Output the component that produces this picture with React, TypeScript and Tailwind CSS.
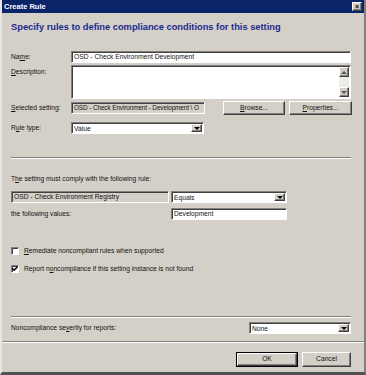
import React from 'react'

const sunken =
  'border border-t-[#808080] border-l-[#808080] border-b-white border-r-white shadow-[inset_1px_1px_0_#404040]'
const raised =
  'border border-t-white border-l-white border-b-[#404040] border-r-[#404040] shadow-[inset_-1px_-1px_0_#808080]'

const Arrow: React.FC = () => (
  <div className={`w-[11px] h-full bg-[#d4d0c8] ${raised} flex items-center justify-center`}>
    <div className="w-0 h-0 border-l-[3px] border-r-[3px] border-t-[3px] border-l-transparent border-r-transparent border-t-black" />
  </div>
)

const Select: React.FC<{ value: string; className: string }> = ({ value, className }) => (
  <div className={`${sunken} bg-white flex items-stretch ${className}`}>
    <span className="flex-1 pl-[2px] leading-[10px] pt-[1px]">{value}</span>
    <div className="p-[1px]">
      <Arrow />
    </div>
  </div>
)

const Button: React.FC<{ label: React.ReactNode; className: string }> = ({ label, className }) => (
  <div className={`${raised} bg-[#d4d0c8] flex items-center justify-center ${className}`}>{label}</div>
)

/**
 * Create Rule dialog
 */
const App: React.FC = () => {
  return (
    <div
      className="w-[366px] h-[375px] bg-[#d4d0c8] text-[6.7px] text-[#111] flex flex-col border-l-2 border-r-2 border-b-[3px] border-l-[#e8e6e0] border-r-[#808080] border-b-[#505050] overflow-hidden"
      style={{ fontFamily: 'Tahoma, "Liberation Sans", Arial, sans-serif' }}
    >
      {/* Title bar */}
      <div className="h-[13px] bg-[#0a246a] flex items-center justify-between pl-[2px] pr-[2px] shrink-0">
        <span className="text-white font-bold text-[7.5px]">Create Rule</span>
        <div className={`w-[10px] h-[9px] bg-[#d4d0c8] ${raised} flex items-center justify-center text-[7px] font-bold leading-none text-black`}>
          ×
        </div>
      </div>

      <div className="flex flex-col px-[9px]">
        {/* Heading */}
        <div className="mt-[8px] h-[12px] text-[#1a2a90] font-bold text-[9.3px] leading-[12px]">
          Specify rules to define compliance conditions for this setting
        </div>

        {/* Name */}
        <div className="mt-[18px] flex items-center h-[12px]">
          <span className="w-[60px]">Na<span className="underline">m</span>e:</span>
          <div className={`${sunken} bg-white flex-1 h-full pl-[2px] leading-[10px] mr-[4px]`}>
            OSD - Check Environment Development
          </div>
        </div>

        {/* Description */}
        <div className="mt-[2px] flex h-[34px]">
          <span className="w-[60px] pt-[2px]"><span className="underline">D</span>escription:</span>
          <div className={`${sunken} bg-white flex-1 h-full mr-[4px] flex justify-end p-[1px]`}>
            <div className="w-[10px] flex flex-col justify-between bg-[#eeece6]">
              <div className={`h-[10px] bg-[#d4d0c8] ${raised} flex items-center justify-center`}>
                <div className="w-0 h-0 border-l-[3px] border-r-[3px] border-b-[3px] border-l-transparent border-r-transparent border-b-[#555]" />
              </div>
              <div className={`h-[10px] bg-[#d4d0c8] ${raised} flex items-center justify-center`}>
                <div className="w-0 h-0 border-l-[3px] border-r-[3px] border-t-[3px] border-l-transparent border-r-transparent border-t-[#555]" />
              </div>
            </div>
          </div>
        </div>

        {/* Selected setting */}
        <div className="mt-[2px] flex items-center h-[14px]">
          <span className="w-[60px]"><span className="underline">S</span>elected setting:</span>
          <div className={`${sunken} bg-[#d4d0c8] w-[134px] h-[12px] pl-[2px] leading-[10px] whitespace-nowrap overflow-hidden text-[6.4px] tracking-[-0.1px]`}>
            OSD - Check Environment - Development \ O
          </div>
          <Button label={<span><span className="underline">B</span>rowse...</span>} className="ml-[18px] w-[62px] h-full" />
          <Button label={<span><span className="underline">P</span>roperties...</span>} className="ml-[4px] w-[63px] h-full" />
        </div>

        {/* Rule type */}
        <div className="mt-[7px] flex items-center h-[12px]">
          <span className="w-[60px]">R<span className="underline">u</span>le type:</span>
          <Select value="Value" className="w-[133px] h-full" />
        </div>

        {/* Separator */}
        <div className="mt-[23px] h-[2px] border-t border-t-[#808080] border-b border-b-white mr-[4px]" />

        <div className="mt-[15px] h-[10px] leading-[10px]">
          T<span className="underline">h</span>e setting must comply with the following rule:
        </div>

        <div className="mt-[7px] flex items-center h-[12px]">
          <div className={`${sunken} bg-[#d4d0c8] w-[158px] h-full pl-[2px] leading-[10px]`}>
            OSD - Check Environment Registry
          </div>
          <Select value="Equals" className="ml-[2px] w-[116px] h-full" />
        </div>

        <div className="mt-[5px] flex items-center h-[12px]">
          <span className="w-[160px]">the following values:</span>
          <div className={`${sunken} bg-white w-[116px] h-full pl-[2px] leading-[10px]`}>Development</div>
        </div>

        {/* Checkboxes */}
        <div className="mt-[27px] flex items-center h-[8px]">
          <div className={`${sunken} bg-white w-[8px] h-[8px]`} />
          <span className="ml-[5px]"><span className="underline">R</span>emediate noncompliant rules when supported</span>
        </div>
        <div className="mt-[10px] flex items-center h-[8px]">
          <div className={`${sunken} bg-white w-[8px] h-[8px] flex items-center justify-center`}>
            <svg width="6" height="6" viewBox="0 0 6 6">
              <path d="M0.5 2.5 L2.2 4.3 L5.5 0.8" stroke="black" strokeWidth="1.4" fill="none" />
            </svg>
          </div>
          <span className="ml-[5px]">Report n<span className="underline">o</span>ncompliance if this setting instance is not found</span>
        </div>

        {/* Separator */}
        <div className="mt-[43px] h-[2px] border-t border-t-[#808080] border-b border-b-white mr-[4px]" />

        <div className="mt-[4px] flex items-center justify-between h-[12px]">
          <span>Noncompliance se<span className="underline">v</span>erity for reports:</span>
          <Select value="None" className="w-[102px] h-full mr-[4px]" />
        </div>
      </div>

      {/* Bottom separator */}
      <div className="mt-[7px] h-[2px] border-t border-t-[#808080] border-b border-b-white" />

      <div className="mt-[9px] flex justify-end pr-[13px] h-[15px]">
        <div className="border border-black flex">
          <Button label="OK" className="w-[60px] h-full" />
        </div>
        <Button label="Cancel" className="ml-[4px] w-[49px] h-full" />
      </div>
    </div>
  )
}

export default App
